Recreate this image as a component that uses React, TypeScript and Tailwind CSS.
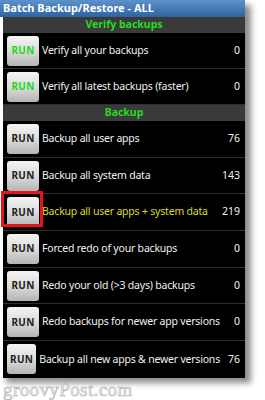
import React from "react";

interface Task {
  label: string;
  count: number;
  highlight?: boolean;
}

const verifyTasks: Task[] = [
  { label: "Verify all your backups", count: 0 },
  { label: "Verify all latest backups (faster)", count: 0 },
];

const backupTasks: Task[] = [
  { label: "Backup all user apps", count: 76 },
  { label: "Backup all system data", count: 143 },
  { label: "Backup all user apps + system data", count: 219, highlight: true },
  { label: "Forced redo of your backups", count: 0 },
  { label: "Redo your old (>3 days) backups", count: 0 },
  { label: "Redo backups for newer app versions", count: 0 },
  { label: "Backup all new apps & newer versions", count: 76 },
];

const font = { fontFamily: '"Noto Sans", "Open Sans", sans-serif' };

// one row: grey RUN button, label, count on the right
function TaskRow({ task, green, last }: { task: Task; green?: boolean; last?: boolean }) {
  return (
    <div
      className={`relative flex items-center pl-[4px] pr-[5px] ${green ? "h-[36px]" : "h-[36.7px]"} ${
        last ? "" : "border-b border-[#2e2e2e]"
      }`}
    >
      <button
        className={`w-[32px] h-[30px] rounded-[3px] bg-gradient-to-b from-[#f4f4f4] via-[#dcdcdc] to-[#b4b4b4] text-[10px] font-bold tracking-[0.3px] ${
          green ? "text-[#1ed81e]" : "text-[#222]"
        }`}
      >
        RUN
      </button>
      <span
        className={`ml-[3px] flex-1 text-[10.5px] tracking-[-0.2px] whitespace-nowrap ${
          task.highlight ? "text-[#d4dc2a]" : "text-[#f0f0f0]"
        }`}
      >
        {task.label}
      </span>
      <span className="text-[10.5px] text-[#f0f0f0] ml-2">{task.count}</span>
      {task.highlight && (
        <div className="absolute left-[-2px] top-[-3px] w-[42px] h-[36px] border-[3px] border-[#e8141a]" />
      )}
    </div>
  );
}

function SectionHeader({ title }: { title: string }) {
  return (
    <div className="h-[16px] bg-[#3a3a3a] flex items-center justify-center text-[10.5px] font-bold text-[#22dd22]">
      {title}
    </div>
  );
}

export default function App() {
  return (
    <div className="w-[265px] h-[400px] bg-white overflow-hidden" style={font}>
      <div className="w-[245px] shadow-[6px_5px_6px_rgba(0,0,0,0.45)]">
        <div className="h-[17px] bg-gradient-to-b from-[#5d92cc] to-[#2e63a2] flex items-center pl-[3px] text-[11px] font-bold text-white">
          Batch Backup/Restore - ALL
        </div>
        <div className="ml-[3px] bg-black">
          <SectionHeader title="Verify backups" />
          {verifyTasks.map((t, i) => (
            <TaskRow key={i} task={t} green />
          ))}
          <SectionHeader title="Backup" />
          {backupTasks.map((t, i) => (
            <TaskRow key={i} task={t} last={i === backupTasks.length - 1} />
          ))}
        </div>
      </div>
      <div
        className="mt-[1px] ml-[3px] text-[19px] leading-[22px] text-[#ececec] tracking-[0.4px]"
        style={{ fontFamily: '"Liberation Serif", serif', WebkitTextStroke: "0.6px #b4b4b4" }}
      >
        groovyPost.com
      </div>
    </div>
  );
}
